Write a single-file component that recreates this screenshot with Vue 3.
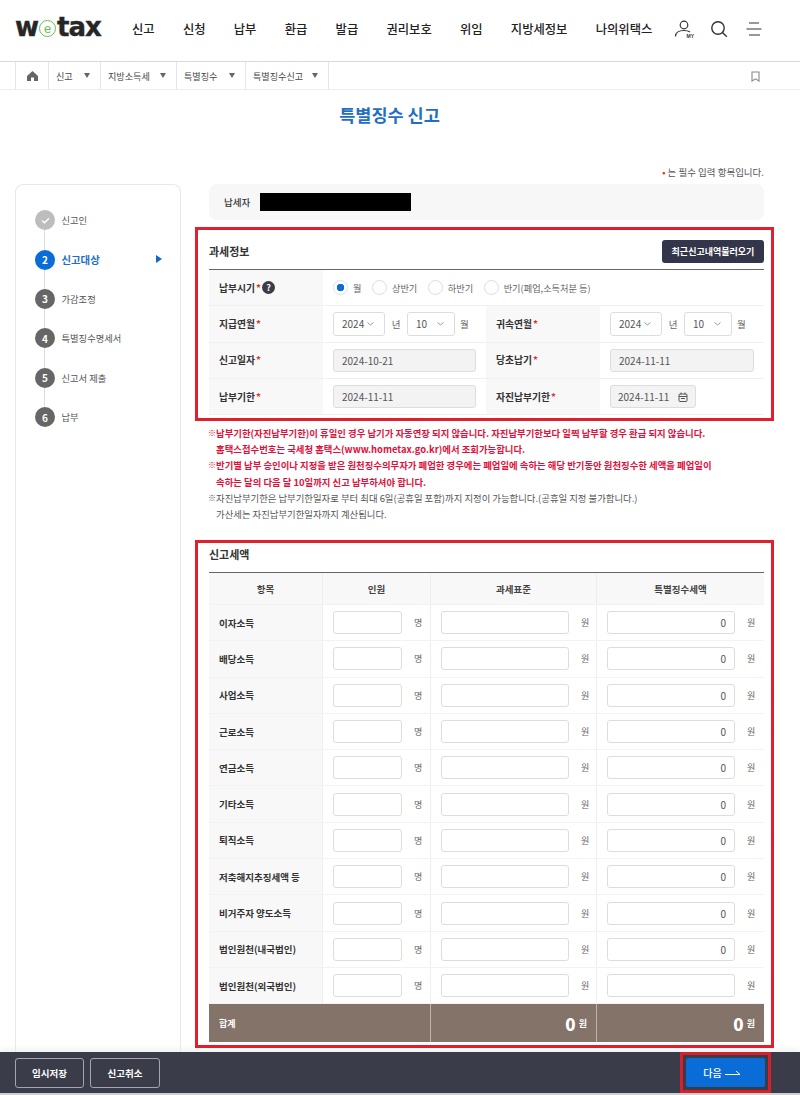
<script setup>
const navItems = ['신고', '신청', '납부', '환급', '발급', '권리보호', '위임', '지방세정보', '나의위택스']

const crumbs = [
  { label: '신고', width: '52px' },
  { label: '지방소득세', width: '76px' },
  { label: '특별징수', width: '69px' },
  { label: '특별징수신고', width: '84px' }
]

const steps = [
  { no: 1, label: '신고인', state: 'done' },
  { no: 2, label: '신고대상', state: 'active' },
  { no: 3, label: '가감조정', state: '' },
  { no: 4, label: '특별징수명세서', state: '' },
  { no: 5, label: '신고서 제출', state: '' },
  { no: 6, label: '납부', state: '' }
]

const radios = [
  { label: '월', checked: true },
  { label: '상반기' },
  { label: '하반기' },
  { label: '반기(폐업,소득처분 등)' }
]

const taxRows = [
  { name: '이자소득', amount: '0' },
  { name: '배당소득', amount: '0' },
  { name: '사업소득', amount: '0' },
  { name: '근로소득', amount: '0' },
  { name: '연금소득', amount: '0' },
  { name: '기타소득', amount: '0' },
  { name: '퇴직소득', amount: '0' },
  { name: '저축해지추징세액 등', amount: '0' },
  { name: '비거주자 양도소득', amount: '0' },
  { name: '법인원천(내국법인)', amount: '0' },
  { name: '법인원천(외국법인)', amount: '' }
]
</script>

<template>
  <div class="page">
    <header class="top">
      <div class="logo">w<span class="logo-e">e</span>tax</div>
      <nav class="nav">
        <a v-for="item in navItems" :key="item">{{ item }}</a>
      </nav>
      <div class="top-icons">
        <span class="my-icon">
          <svg width="20" height="20" viewBox="0 0 20 20" fill="none" stroke="#333" stroke-width="1.2">
            <circle cx="10" cy="6" r="3.8" />
            <path d="M1.5 17.5c0-4 3.5-6 8.5-6 2.5 0 4.500.5 6 1.500" />
          </svg>
          <b>MY</b>
        </span>
        <svg width="18" height="18" viewBox="0 0 18 18" fill="none" stroke="#333" stroke-width="1.4">
          <circle cx="8" cy="8" r="6.200" />
          <path d="M12.500 12.500l4.300 4.300" />
        </svg>
        <svg width="16" height="14" viewBox="0 0 16 14" fill="none" stroke="#333" stroke-width="1.200">
          <path d="M3 1h10M0.500 7h15M3 13h11" />
        </svg>
      </div>
    </header>

    <div class="crumbs">
      <div class="crumb home">
        <svg width="11" height="10" viewBox="0 0 11 10" fill="#666"><path d="M5.500 0L11 5v5H7V6.500H4V10H0V5z" /></svg>
      </div>
      <div v-for="c in crumbs" :key="c.label" class="crumb" :style="{ width: c.width }">
        <span>{{ c.label }}</span><i class="tri"></i>
      </div>
      <svg class="bookmark" width="9" height="11" viewBox="0 0 9 11" fill="none" stroke="#888" stroke-width="1.100">
        <path d="M1 1h7v9L4.500 7.800 1 10z" />
      </svg>
    </div>

    <h1 class="title">특별징수 신고</h1>
    <p class="required"><em>•</em> 는 필수 입력 항목입니다.</p>

    <div class="body">
      <aside class="side">
        <div class="rail"></div>
        <div v-for="s in steps" :key="s.no" class="step" :class="s.state">
          <span class="num">
            <svg v-if="s.state === 'done'" width="9" height="7" viewBox="0 0 9 7" fill="none" stroke="#fff" stroke-width="1.300"><path d="M1 3.500l2.500 2.300L8 1.200" /></svg>
            <template v-else>{{ s.no }}</template>
          </span>
          <span class="step-label">{{ s.label }}</span>
          <i v-if="s.state === 'active'" class="step-arrow"></i>
        </div>
      </aside>

      <main class="main">
        <div class="payer">
          <span>납세자</span>
          <div class="masked"></div>
        </div>

        <section class="frame frame-info">
          <div class="sec-head">
            <h2>과세정보</h2>
            <button class="load-btn">최근신고내역불러오기</button>
          </div>
          <div class="info">
            <div class="info-row first">
              <div class="th">납부시기<em>*</em><span class="help">?</span></div>
              <div class="td radios">
                <label v-for="r in radios" :key="r.label" class="radio" :class="{ on: r.checked }">
                  <i></i>{{ r.label }}
                </label>
              </div>
            </div>
            <div class="info-row">
              <div class="th">지급연월<em>*</em></div>
              <div class="td">
                <div class="sel y">2024<svg width="7" height="4" viewBox="0 0 7 4" fill="none" stroke="#999"><path d="M.5.500l3 2.500 3-2.500" /></svg></div>
                <span class="unit">년</span>
                <div class="sel m">10<svg width="7" height="4" viewBox="0 0 7 4" fill="none" stroke="#999"><path d="M.5.500l3 2.500 3-2.500" /></svg></div>
                <span class="unit">월</span>
              </div>
              <div class="th">귀속연월<em>*</em></div>
              <div class="td">
                <div class="sel y">2024<svg width="7" height="4" viewBox="0 0 7 4" fill="none" stroke="#999"><path d="M.5.500l3 2.500 3-2.500" /></svg></div>
                <span class="unit">년</span>
                <div class="sel m">10<svg width="7" height="4" viewBox="0 0 7 4" fill="none" stroke="#999"><path d="M.5.500l3 2.500 3-2.500" /></svg></div>
                <span class="unit">월</span>
              </div>
            </div>
            <div class="info-row">
              <div class="th">신고일자<em>*</em></div>
              <div class="td"><input class="ro" value="2024-10-21" readonly /></div>
              <div class="th">당초납기<em>*</em></div>
              <div class="td"><input class="ro" value="2024-11-11" readonly /></div>
            </div>
            <div class="info-row">
              <div class="th">납부기한<em>*</em></div>
              <div class="td"><input class="ro" value="2024-11-11" readonly /></div>
              <div class="th">자진납부기한<em>*</em></div>
              <div class="td">
                <div class="date">
                  2024-11-11
                  <svg width="10" height="10" viewBox="0 0 10 10" fill="none" stroke="#555" stroke-width="1"><rect x="1" y="2" width="8" height="7.500" rx="1" /><path d="M3 .500v2M7 .500v2M1 4.500h8M3 6.500h4" /></svg>
                </div>
              </div>
            </div>
          </div>
        </section>

        <div class="notes">
          <p class="red"><span>※</span>납부기한(자진납부기한)이 휴일인 경우 납기가 자동연장 되지 않습니다. 자진납부기한보다 일찍 납부할 경우 환급 되지 않습니다.</p>
          <p class="red"><span></span>홈택스접수번호는 국세청 홈택스(www.hometax.go.kr)에서 조회가능합니다.</p>
          <p class="red"><span>※</span>반기별 납부 승인이나 지정을 받은 원천징수의무자가 폐업한 경우에는 폐업일에 속하는 해당 반기동안 원천징수한 세액을 폐업일이</p>
          <p class="red"><span></span>속하는 달의 다음 달 10일까지 신고 납부하셔야 합니다.</p>
          <p><span>※</span>자진납부기한은 납부기한일자로 부터 최대 6일(공휴일 포함)까지 지정이 가능합니다.(공휴일 지정 불가합니다.)</p>
          <p><span></span>가산세는 자진납부기한일자까지 계산됩니다.</p>
        </div>

        <section class="frame frame-tax">
          <h2 class="tax-title">신고세액</h2>
          <div class="tax">
            <div class="tax-row head">
              <div>항목</div>
              <div>인원</div>
              <div>과세표준</div>
              <div>특별징수세액</div>
            </div>
            <div v-for="row in taxRows" :key="row.name" class="tax-row">
              <div class="name">{{ row.name }}</div>
              <div class="cell"><input class="num-input short" /><span>명</span></div>
              <div class="cell"><input class="num-input" /><span>원</span></div>
              <div class="cell"><input class="num-input" :value="row.amount" /><span>원</span></div>
            </div>
            <div class="tax-row total">
              <div class="total-name">합계</div>
              <div class="sum"><b>0</b> 원</div>
              <div class="sum"><b>0</b> 원</div>
            </div>
          </div>
        </section>
      </main>
    </div>

    <footer class="foot">
      <div class="foot-left">
        <button>임시저장</button>
        <button>신고취소</button>
      </div>
      <div class="next-frame">
        <button class="next">다음 <svg width="16" height="5" viewBox="0 0 16 5" fill="none" stroke="#fff" stroke-width="1"><path d="M0 4.500h15L11 1" /></svg></button>
      </div>
    </footer>
  </div>
</template>

<style scoped>
.page {
  height: 100vh;
  display: flex;
  flex-direction: column;
  overflow: hidden;
  background: #fff;
  color: #333;
  font-family: "Noto Sans CJK KR", "Noto Sans", sans-serif;
}

.top {
  flex: none;
  height: 61px;
  display: flex;
  align-items: center;
  padding: 0 38px 0 15px;
}

.logo {
  width: 117px;
  display: flex;
  align-items: center;
  font-family: "DejaVu Sans", sans-serif;
  font-weight: 700;
  font-size: 26px;
  letter-spacing: -1px;
  line-height: 1;
  color: #262626;
  margin-top: -8px;
  -webkit-text-stroke: 0.4px #262626;
}

.logo-e {
  width: 17px;
  height: 17px;
  margin: 3px 1px 0 1px;
  border: 1.5px solid #6fbb4f;
  border-radius: 50%;
  box-sizing: border-box;
  display: flex;
  align-items: center;
  justify-content: center;
  font-family: "Liberation Sans", sans-serif;
  font-weight: 400;
  font-size: 13px;
  letter-spacing: 0;
  color: #6fbb4f;
  -webkit-text-stroke: 0;
}

.nav {
  display: flex;
  gap: 28.250px;
  margin-top: -3px;
}

.nav a {
  font-size: 12.300px;
  font-weight: 500;
  color: #222;
  white-space: nowrap;
}

.top-icons {
  margin-left: auto;
  display: flex;
  align-items: center;
  gap: 16px;
  margin-top: -3px;
}

.top-icons > svg:last-child {
  margin-left: 2px;
}

.my-icon {
  position: relative;
  width: 20px;
  height: 20px;
}

.my-icon b {
  position: absolute;
  right: 0;
  bottom: 0;
  font-family: "Liberation Sans", sans-serif;
  font-size: 5px;
  color: #333;
}

.crumbs {
  flex: none;
  height: 29px;
  box-sizing: border-box;
  border-top: 1px solid #d9d9d9;
  border-bottom: 1px solid #eee;
  padding-left: 15px;
  display: flex;
  position: relative;
}

.crumb {
  box-sizing: border-box;
  border-left: 1px solid #e6e6e6;
  display: flex;
  align-items: center;
  justify-content: space-between;
  padding: 0 10px 0 7px;
  font-size: 9.100px;
  color: #444;
}

.crumb:last-of-type {
  border-right: 1px solid #e6e6e6;
}

.crumb.home {
  width: 33px;
  justify-content: center;
  padding: 0;
}

.tri {
  width: 0;
  height: 0;
  border-left: 3px solid transparent;
  border-right: 3px solid transparent;
  border-top: 5px solid #666;
}

.bookmark {
  position: absolute;
  right: 40px;
  top: 9px;
}

.title {
  flex: none;
  margin: 0;
  padding: 13px 21px 0 0;
  height: 42px;
  text-align: center;
  font-size: 17.500px;
  line-height: 24px;
  font-weight: 700;
  color: #1f6fc4;
}

.required {
  flex: none;
  margin: 0;
  height: 39px;
  box-sizing: border-box;
  padding: 20px 36px 0 0;
  text-align: right;
  font-size: 9.500px;
  line-height: 14px;
  color: #555;
}

.required em {
  color: #e0301e;
  font-style: normal;
}

.body {
  flex: 1;
  min-height: 0;
  display: flex;
  gap: 28px;
  padding-left: 15px;
}

.side {
  position: relative;
  width: 166px;
  box-sizing: border-box;
  border: 1px solid #e8e8e8;
  border-bottom: 0;
  border-radius: 8px 8px 0 0;
  padding-top: 15.500px;
}

.rail {
  position: absolute;
  left: 28px;
  top: 35px;
  width: 1px;
  height: 196px;
  background: #ddd;
}

.step {
  position: relative;
  height: 39.400px;
  display: flex;
  align-items: center;
  padding-left: 19px;
  font-size: 9.300px;
  color: #555;
}

.num {
  width: 20px;
  height: 20px;
  border-radius: 50%;
  background: #666;
  color: #fff;
  font-size: 10px;
  font-weight: 700;
  display: flex;
  align-items: center;
  justify-content: center;
  margin-right: 6.500px;
}

.step.done .num {
  background: #bdbdbd;
}

.step.active .num {
  background: #0a6cd6;
}

.step.active .step-label {
  color: #1f6fc4;
  font-weight: 700;
  font-size: 10.400px;
}

.step-arrow {
  position: absolute;
  left: 140px;
  top: 15px;
  border-left: 6px solid #1069c8;
  border-top: 4px solid transparent;
  border-bottom: 4px solid transparent;
}

.main {
  width: 555px;
}

.payer {
  height: 36px;
  background: #f7f7f7;
  border-radius: 8px;
  display: flex;
  align-items: center;
  padding-left: 15px;
  font-size: 9.500px;
  font-weight: 500;
  color: #333;
}

.masked {
  width: 151px;
  height: 18px;
  background: #000;
  margin-left: 10px;
}

.frame {
  margin: 0 -10px 0 -14px;
  padding: 0 7px 0 11px;
  border: 3px solid #e1202e;
  box-sizing: border-box;
}

.frame-info {
  height: 194px;
  margin-top: 7px;
}

.sec-head {
  height: 40px;
  box-sizing: border-box;
  border-bottom: 1px solid #666;
  display: flex;
  align-items: flex-start;
  justify-content: space-between;
  padding-top: 10px;
}

.sec-head h2,
.tax-title {
  margin: 0;
  font-size: 11px;
  line-height: 23px;
  font-weight: 700;
  color: #333;
}

.load-btn {
  width: 102px;
  height: 23px;
  border: 0;
  border-radius: 3px;
  background: #33354a;
  color: #fff;
  font-family: inherit;
  font-size: 9px;
  font-weight: 700;
  padding: 0;
}

.info-row {
  display: grid;
  grid-template-columns: 114px 163px 114px 164px;
  height: 36.300px;
  border-bottom: 1px solid #f0f0f0;
  box-sizing: border-box;
}

.info-row.first {
  grid-template-columns: 114px 1fr;
}

.th {
  display: flex;
  align-items: center;
  padding-left: 10px;
  background: #f8f8f8;
  font-size: 9.800px;
  font-weight: 700;
  color: #333;
}

.th em {
  color: #e0301e;
  font-style: normal;
  margin-left: 1px;
}

.help {
  width: 13px;
  height: 13px;
  margin-left: 1px;
  border-radius: 50%;
  background: #3a3c48;
  color: #fff;
  font-size: 9px;
  display: flex;
  align-items: center;
  justify-content: center;
}

.td {
  display: flex;
  align-items: center;
  padding-left: 10px;
  font-size: 9.500px;
  color: #666;
}

.radios {
  gap: 10.500px;
}

.radio {
  display: flex;
  align-items: center;
  gap: 5px;
  font-size: 9.200px;
  color: #666;
}

.radio i {
  box-sizing: border-box;
  width: 15px;
  height: 15px;
  border-radius: 50%;
  border: 1px solid #ddd;
  background: #fff;
}

.radio.on i {
  border-color: #d4e3f3;
  background: radial-gradient(circle, #0a6cd6 0 3.500px, #fff 4px);
}

.sel {
  box-sizing: border-box;
  height: 24px;
  border: 1px solid #ddd;
  border-radius: 3px;
  display: flex;
  align-items: center;
  justify-content: space-between;
  padding: 0 10px 0 8px;
  font-size: 10px;
  color: #555;
}

.sel.y {
  width: 52px;
}

.sel.m {
  width: 48px;
}

.unit {
  width: 22px;
  text-align: center;
}

.unit:last-child {
  width: auto;
  margin-left: 5px;
}

.ro,
.date {
  box-sizing: border-box;
  height: 23px;
  border: 1px solid #ddd;
  border-radius: 3px;
  background: #f3f3f3;
  font-family: inherit;
  font-size: 10px;
  color: #555;
}

.ro {
  width: 143px;
  padding: 0 8px;
  outline: none;
}

.date {
  width: 86px;
  display: flex;
  align-items: center;
  justify-content: space-between;
  padding: 0 7px;
}

.td:last-child .ro {
  width: 144px;
}

.notes {
  margin-top: 4px;
  height: 97px;
  margin-left: -1px;
}

.notes p {
  margin: 0;
  display: flex;
  height: 16.200px;
  font-size: 9.400px;
  line-height: 16.200px;
  color: #555;
  white-space: nowrap;
}

.notes p.red {
  color: #e0103a;
  font-weight: 700;
}

.notes p span {
  width: 8px;
  flex: none;
  font-size: 8px;
  font-weight: 400;
}

.frame-tax {
  height: 508px;
  margin-top: 18px;
}

.tax-title {
  height: 29px;
  line-height: 22px;
}

.tax {
  border-top: 1px solid #666;
}

.tax-row {
  display: grid;
  grid-template-columns: 114px 108px 166px 167px;
  height: 36.300px;
  box-sizing: border-box;
  border-bottom: 1px solid #f2f2f2;
  font-size: 9.500px;
}

.tax-row > div {
  display: flex;
  align-items: center;
  border-right: 1px solid #eee;
  box-sizing: border-box;
}

.tax-row > div:last-child {
  border-right: 0;
}

.tax-row.head {
  height: 32px;
  background: #f8f8f8;
  font-size: 9.500px;
  font-weight: 700;
  color: #444;
}

.tax-row.head > div {
  justify-content: center;
}

.name {
  padding-left: 10px;
  background: #f8f8f8;
  font-weight: 700;
  color: #333;
}

.cell {
  padding-left: 10px;
  color: #666;
  font-size: 9px;
}

.cell span {
  margin-left: 12px;
}

.num-input {
  box-sizing: border-box;
  width: 128px;
  height: 23px;
  border: 1px solid #ddd;
  border-radius: 3px;
  background: #fff;
  padding: 0 8px;
  text-align: right;
  font-family: inherit;
  font-size: 10px;
  color: #555;
  outline: none;
}

.num-input.short {
  width: 69px;
}

.tax-row.total {
  height: 38px;
  background: #847369;
  border: 0;
  color: #fff;
}

.total-name {
  grid-column: span 2;
  padding-left: 10px;
  font-size: 9px;
  font-weight: 700;
  border-right-color: #bdb3ad !important;
}

.sum {
  justify-content: flex-end;
  padding-right: 9px;
  gap: 3px;
  font-size: 9px;
  font-weight: 700;
  border-right-color: #bdb3ad !important;
}

.sum b {
  font-size: 17px;
  line-height: 1;
}

.foot {
  flex: none;
  height: 43px;
  box-sizing: border-box;
  background: #3a3c4a;
  border-bottom: 2px solid #d0d0d0;
  box-shadow: 0 -3px 6px rgba(0, 0, 0, 0.06);
  display: flex;
  align-items: center;
  justify-content: space-between;
  padding: 0 29px 0 15px;
}

.foot-left {
  display: flex;
  gap: 6px;
}

.foot-left button {
  width: 69px;
  height: 30px;
  background: transparent;
  border: 1px solid #a4a5ae;
  border-radius: 3px;
  color: #fff;
  font-family: inherit;
  font-size: 9.500px;
  font-weight: 700;
  padding: 0;
}

.foot-left button:last-child {
  width: 70px;
}

.next-frame {
  border: 3px solid #d8202c;
  padding: 3px;
  height: 41px;
  box-sizing: border-box;
}

.next {
  width: 79px;
  height: 29px;
  border: 0;
  border-radius: 2px;
  background: #0a6cd6;
  color: #fff;
  font-family: inherit;
  font-size: 10px;
  font-weight: 500;
  padding: 0 7px 0 0;
  display: flex;
  align-items: center;
  justify-content: center;
  gap: 3px;
}
</style>

<style>
html,
body {
  margin: 0;
  overflow: hidden;
}
</style>
